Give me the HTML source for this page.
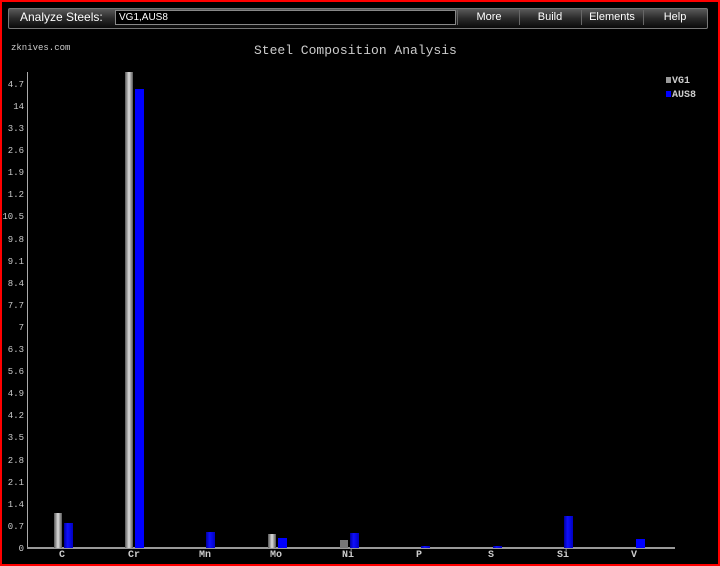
<!DOCTYPE html><html><head><style>
body{margin:0;width:720px;height:566px;background:#000;overflow:hidden;position:relative;font-family:"Liberation Sans",sans-serif}
.frame{position:absolute;left:0;top:0;width:716px;height:562px;border:2px solid #f00}
.bar{position:absolute;left:8px;top:8px;width:698px;height:19px;background:linear-gradient(#5a5a5a,#2a2a2a 50%,#0a0a0a);border:1px solid #777;border-radius:2px}
.lbl{position:absolute;left:20px;top:10px;color:#fff;font-size:12px}
.inp{position:absolute;left:115px;top:10px;width:336px;height:13px;background:#000;border:1px solid #888;color:#fff;font-size:10px;line-height:13px;padding-left:3px;box-sizing:content-box}
.btn{position:absolute;top:11px;color:#fff;font-size:11px;text-align:center}
.sep{position:absolute;top:10px;width:1px;height:15px;background:#666}
.m{font-family:"Liberation Mono",monospace;color:#ccc;position:absolute}
.yl{position:absolute;right:696px;font-size:9px;color:#ccc;font-family:"Liberation Mono",monospace;line-height:10px}
.g{position:absolute;width:8px;background:linear-gradient(90deg,#555,#ddd 50%,#555)}
.b{position:absolute;width:9px;background:linear-gradient(90deg,#0000a0,#1010ff 40%,#0000c0)}
.xl{position:absolute;top:550px;font-size:10px;color:#ccc;font-family:"Liberation Mono",monospace;font-weight:bold;transform:translateX(-50%)}
</style></head><body>
<div class="frame"></div>
<div class="bar"></div>
<div class="lbl">Analyze Steels:</div>
<div class="inp">VG1,AUS8</div>
<div class="sep" style="left:457px"></div>
<div class="btn" style="left:460px;width:58px">More</div>
<div class="sep" style="left:519px"></div>
<div class="btn" style="left:520px;width:60px">Build</div>
<div class="sep" style="left:581px"></div>
<div class="btn" style="left:582px;width:60px">Elements</div>
<div class="sep" style="left:643px"></div>
<div class="btn" style="left:644px;width:62px">Help</div>
<div class="m" style="left:11px;top:43px;font-size:9px">zknives.com</div>
<div class="m" style="left:254px;top:43px;font-size:13px">Steel Composition Analysis</div>
<div class="m" style="left:666px;top:76px;font-size:10px;font-weight:bold"><span style="display:inline-block;width:5px;height:6px;background:#999;margin-right:1px"></span>VG1</div>
<div class="m" style="left:666px;top:90px;font-size:10px;font-weight:bold"><span style="display:inline-block;width:5px;height:6px;background:#00f;margin-right:1px"></span>AUS8</div>
<div style="position:absolute;left:27px;top:72px;width:1px;height:477px;background:#aaa"></div>
<div style="position:absolute;left:27px;top:547px;width:648px;height:2px;background:#999"></div>
<div class="g" style="left:54px;top:513px;height:35px"></div>
<div class="b" style="left:64px;top:523px;height:25px"></div>
<div class="g" style="left:125px;top:72px;height:476px"></div>
<div class="b" style="left:135px;top:89px;height:459px;background:#00f"></div>
<div class="b" style="left:206px;top:532px;height:16px"></div>
<div class="g" style="left:268px;top:534px;height:14px"></div>
<div class="b" style="left:278px;top:538px;height:10px;background:#00f"></div>
<div class="g" style="left:340px;top:540px;height:8px;background:#777"></div>
<div class="b" style="left:350px;top:533px;height:15px"></div>
<div class="b" style="left:421px;top:546px;height:2px"></div>
<div class="b" style="left:493px;top:546px;height:2px"></div>
<div class="b" style="left:564px;top:516px;height:32px"></div>
<div class="b" style="left:636px;top:539px;height:9px;background:#00f"></div>
<div class="xl" style="left:62px">C</div><div class="xl" style="left:134px">Cr</div><div class="xl" style="left:205px">Mn</div><div class="xl" style="left:276px">Mo</div><div class="xl" style="left:348px">Ni</div><div class="xl" style="left:419px">P</div><div class="xl" style="left:491px">S</div><div class="xl" style="left:563px">Si</div><div class="xl" style="left:634px">V</div>
<div class="yl" style="top:80px">4.7</div><div class="yl" style="top:102px">14</div><div class="yl" style="top:124px">3.3</div><div class="yl" style="top:146px">2.6</div><div class="yl" style="top:168px">1.9</div><div class="yl" style="top:190px">1.2</div><div class="yl" style="top:212px">10.5</div><div class="yl" style="top:235px">9.8</div><div class="yl" style="top:257px">9.1</div><div class="yl" style="top:279px">8.4</div><div class="yl" style="top:301px">7.7</div><div class="yl" style="top:323px">7</div><div class="yl" style="top:345px">6.3</div><div class="yl" style="top:367px">5.6</div><div class="yl" style="top:389px">4.9</div><div class="yl" style="top:411px">4.2</div><div class="yl" style="top:433px">3.5</div><div class="yl" style="top:456px">2.8</div><div class="yl" style="top:478px">2.1</div><div class="yl" style="top:500px">1.4</div><div class="yl" style="top:522px">0.7</div><div class="yl" style="top:544px">0</div>
</body></html>
